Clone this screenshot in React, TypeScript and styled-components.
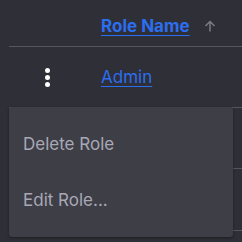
import styled, { createGlobalStyle } from 'styled-components';

const Global = createGlobalStyle`
  html, body {
    margin: 0;
    padding: 0;
    background: #2f2f37;
    font-family: "Inter", "Liberation Sans", sans-serif;
  }
`;

const Page = styled.div`
  position: relative;
  width: 242px;
  height: 242px;
  overflow: hidden;
  padding-left: 9px;
  box-sizing: border-box;
`;

const Row = styled.div<{ $height: number }>`
  display: grid;
  grid-template-columns: 92px 1fr;
  align-items: center;
  height: ${p => p.$height}px;
  border-bottom: 1px solid #55555c;
  box-sizing: border-box;
`;

const HeaderLink = styled.a`
  color: #2b6ef0;
  font-weight: 700;
  font-size: 17px;
  text-decoration: underline;
  text-underline-offset: 3px;
  display: inline-flex;
  align-items: center;
`;

const CellLink = styled.a`
  color: #2b6ef0;
  font-size: 17px;
  text-decoration: underline;
  text-underline-offset: 3px;
`;

const Head = styled.div`
  display: flex;
  align-items: center;
  gap: 14px;
  padding-top: 5px;
`;

const Dots = styled.div`
  display: flex;
  flex-direction: column;
  align-items: center;
  gap: 2px;
  padding-left: 36px;
  width: 5px;
  span {
    width: 5px;
    height: 5px;
    border-radius: 50%;
    background: #ffffff;
  }
`;

const Menu = styled.div`
  position: absolute;
  left: 9px;
  top: 107px;
  width: 224px;
  height: 130px;
  background: #3e3e46;
  border-radius: 3px;
  box-shadow: 0 1px 3px rgba(0, 0, 0, 0.4);
  display: flex;
  flex-direction: column;
  justify-content: center;
`;

const Item = styled.div`
  color: #a8a8b6;
  font-size: 17px;
  padding: 0 14px;
  height: 56px;
  display: flex;
  align-items: center;
`;

export default function App() {
  return (
    <Page>
      <Global />
      <Row $height={47}>
        <div />
        <Head>
          <HeaderLink href="#">Role Name</HeaderLink>
          <svg width="12" height="12" viewBox="0 0 12 12" fill="none" stroke="#7c7c86" strokeWidth="1.5">
            <path d="M6 11.5V1.5M1.5 6L6 1.5L10.5 6" />
          </svg>
        </Head>
      </Row>
      <Row $height={61}>
        <Dots>
          <span />
          <span />
          <span />
        </Dots>
        <CellLink href="#">Admin</CellLink>
      </Row>
      <Row $height={61} />
      <Row $height={62} />
      <Menu>
        <Item>Delete Role</Item>
        <Item>Edit Role...</Item>
      </Menu>
    </Page>
  );
}
